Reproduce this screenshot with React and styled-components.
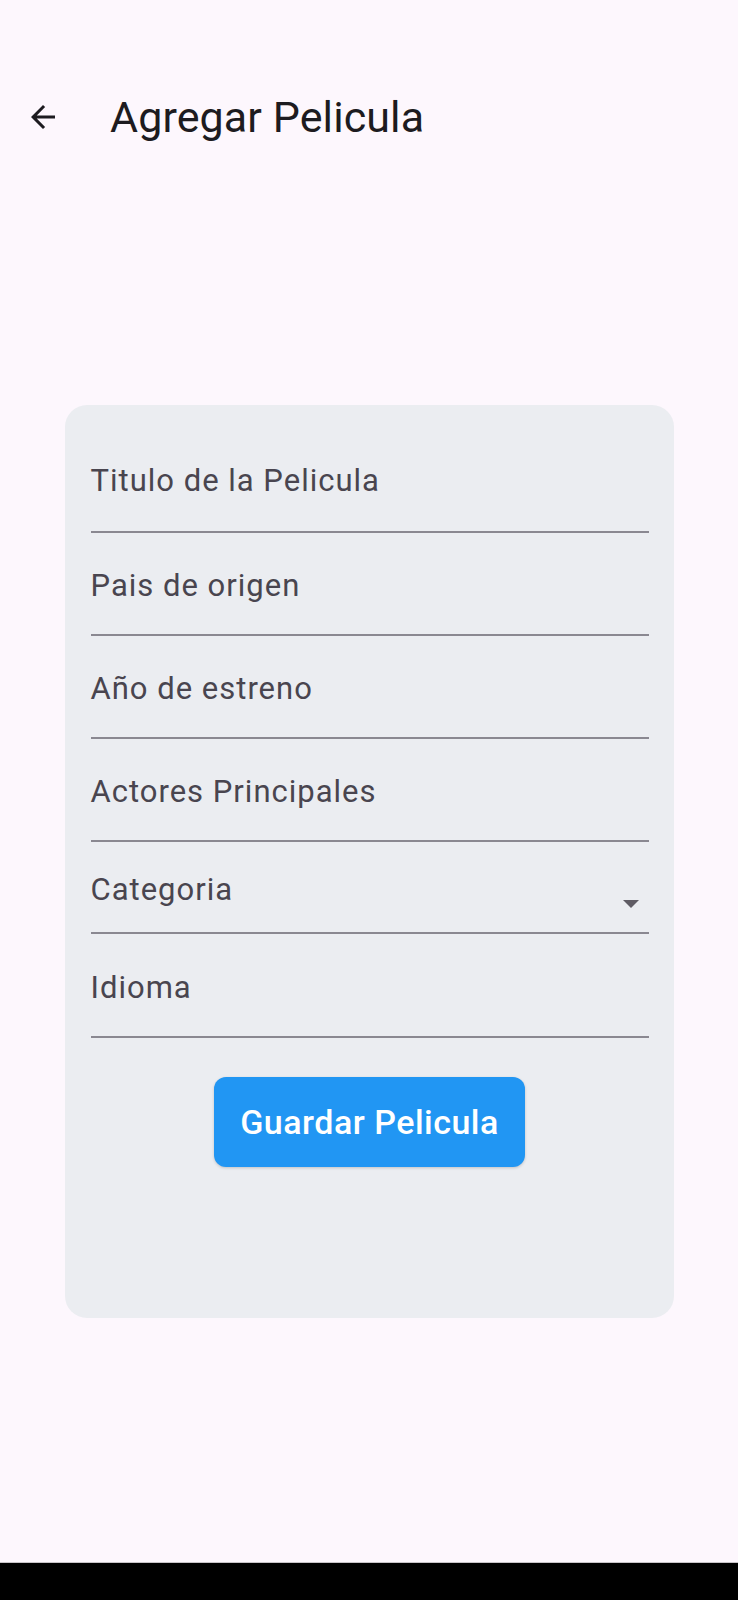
import React from "react";
import styled, { createGlobalStyle } from "styled-components";

const Global = createGlobalStyle`
  html, body { margin: 0; padding: 0; background: #fdf7fd; }
  body { font-family: Roboto, "Noto Sans", sans-serif; }
`;

const Page = styled.div`
  width: 738px;
  height: 1600px;
  background: #fdf7fd;
  display: flex;
  flex-direction: column;
  overflow: hidden;
`;

const AppBar = styled.header`
  height: 100px;
  margin-top: 67px;
  display: flex;
  align-items: center;
  padding-left: 25px;
  gap: 49px;
`;

const BackButton = styled.button`
  width: 36px;
  height: 36px;
  padding: 0;
  border: none;
  background: transparent;
  display: flex;
  align-items: center;
  justify-content: center;
  color: #1d1b20;
`;

const Title = styled.h1`
  margin: 0;
  font-size: 43px;
  font-weight: 400;
  color: #1d1b20;
  letter-spacing: 0.1px;
`;

const Main = styled.main`
  flex: 1;
  display: flex;
  flex-direction: column;
  align-items: center;
  padding-top: 238px;
`;

const Card = styled.section`
  width: 609px;
  height: 913px;
  box-sizing: border-box;
  background: #ebedf1;
  border-radius: 22px;
  padding: 23px 25px 0 26px;
  display: flex;
  flex-direction: column;
`;

const Field = styled.div`
  display: flex;
  align-items: center;
  justify-content: space-between;
  padding-top: ${(p) => p.$top}px;
  padding-bottom: ${(p) => p.$bottom}px;
  border-bottom: 2px solid #8a8891;
`;

const Label = styled.span`
  font-size: 31px;
  line-height: 34px;
  letter-spacing: 1px;
  color: #49454f;
`;

const Caret = styled.span`
  width: 0;
  height: 0;
  border-left: 8px solid transparent;
  border-right: 8px solid transparent;
  border-top: 8px solid #5f5c64;
  margin-right: 10px;
  align-self: flex-end;
  margin-bottom: -1px;
`;

const ButtonRow = styled.div`
  display: flex;
  justify-content: center;
  padding-top: 39px;
`;

const SaveButton = styled.button`
  width: 311px;
  height: 90px;
  border: none;
  border-radius: 12px;
  background: #2196f3;
  color: #ffffff;
  font-family: Roboto, "Noto Sans", sans-serif;
  font-size: 34px;
  font-weight: 500;
  letter-spacing: 0.5px;
  box-shadow: 0 1px 3px rgba(0, 0, 0, 0.18);
`;

const Spacer = styled.div`
  flex: 1;
`;

const NavBar = styled.div`
  height: 37px;
  background: #000;
  border-top: 1px solid #c8c4c8;
`;

const fields = [
  { label: "Titulo de la Pelicula", top: 36, bottom: 33 },
  { label: "Pais de origen", top: 36, bottom: 31 },
  { label: "Año de estreno", top: 36, bottom: 31 },
  { label: "Actores Principales", top: 36, bottom: 31 },
  { label: "Categoria", top: 31, bottom: 25, dropdown: true },
  { label: "Idioma", top: 37, bottom: 31 },
];

export default function App() {
  return (
    <Page>
      <Global />
      <AppBar>
        <BackButton aria-label="Volver">
          <svg width="36" height="36" viewBox="0 0 24 24">
            <path
              d="M20 11H7.83l5.59-5.59L12 4l-8 8 8 8 1.41-1.41L7.83 13H20v-2z"
              fill="#1d1b20"
            />
          </svg>
        </BackButton>
        <Title>Agregar Pelicula</Title>
      </AppBar>
      <Main>
        <Card>
          {fields.map((f) => (
            <Field key={f.label} $top={f.top} $bottom={f.bottom}>
              <Label>{f.label}</Label>
              {f.dropdown && <Caret />}
            </Field>
          ))}
          <ButtonRow>
            <SaveButton>Guardar Pelicula</SaveButton>
          </ButtonRow>
        </Card>
      </Main>
      <Spacer />
      <NavBar />
    </Page>
  );
}
